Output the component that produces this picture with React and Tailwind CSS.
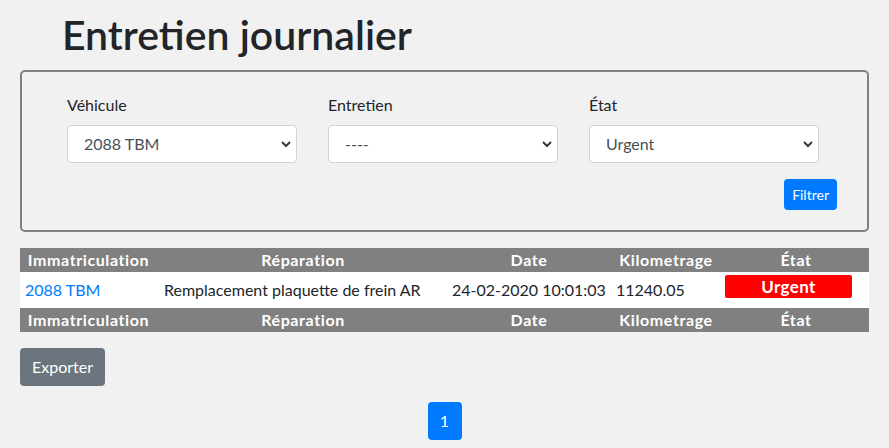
import React from "react";

const FONT = { fontFamily: 'Lato, "Noto Sans", sans-serif' };

function Chevron() {
  return (
    <svg
      className="absolute right-[6px] top-1/2 -translate-y-1/2 pointer-events-none"
      width="10"
      height="7"
      viewBox="0 0 10 7"
    >
      <path d="M1 1.5 L5 5.5 L9 1.5" stroke="#343a40" strokeWidth="2" fill="none" />
    </svg>
  );
}

function SelectBox({ label, value }) {
  return (
    <div className="w-[230px]">
      <label className="block text-[16px] leading-6 text-[#212529] mb-[8px]">{label}</label>
      <div className="relative">
        <div className="h-[38px] bg-white border border-[#ced4da] rounded-[4px] pl-[16px] flex items-center text-[16px] text-[#495057]">
          {value}
        </div>
        <Chevron />
      </div>
    </div>
  );
}

function HeadRow() {
  return (
    <div className="grid grid-cols-[137px_292px_160px_114px_1fr] h-[24px] bg-[#808080] text-white font-bold text-[16px] leading-[24px] text-center tracking-[0.6px]">
      <div>Immatriculation</div>
      <div>Réparation</div>
      <div>Date</div>
      <div>Kilometrage</div>
      <div>État</div>
    </div>
  );
}

export default function App() {
  return (
    <div className="min-h-screen bg-[#f1f1f1] text-[#212529]" style={FONT}>
      <div className="px-[20px] pt-[11px]">
        <h1 className="pl-[42px] text-[41px] font-semibold leading-[48px] text-[#212529]">
          Entretien journalier
        </h1>

        <div className="mt-[11px] border-2 border-[#808080] rounded-[5px] pl-[45px] pr-[30px] pt-[21px] pb-[20px]">
          <div className="flex gap-[31px]">
            <SelectBox label="Véhicule" value="2088 TBM" />
            <SelectBox label="Entretien" value="----" />
            <SelectBox label="État" value="Urgent" />
          </div>
          <div className="flex justify-end mt-[16px]">
            <button className="h-[31px] px-[8px] bg-[#007bff] text-white text-[14px] rounded-[4px]">
              Filtrer
            </button>
          </div>
        </div>

        <div className="mt-[16px]">
          <HeadRow />
          <div className="grid grid-cols-[137px_292px_160px_114px_1fr] h-[36px] bg-white text-[16px] items-center">
            <div className="pl-[5px] text-[#007bff]">2088 TBM</div>
            <div className="pl-[7px]">Remplacement plaquette de frein AR</div>
            <div className="pl-[3px]">24-02-2020 10:01:03</div>
            <div className="pl-[7px]">11240.05</div>
            <div className="pl-[2px] self-start pt-[3px]">
              <div className="w-[127px] h-[23px] bg-[#ff0000] text-white font-bold text-[17px] text-center leading-[23px] rounded-[2px] tracking-[0.4px]">
                Urgent
              </div>
            </div>
          </div>
          <HeadRow />
        </div>

        <button className="mt-[16px] h-[38px] px-[12px] bg-[#6c757d] text-white text-[16px] rounded-[4px]">
          Exporter
        </button>

        <div className="flex justify-center mt-[16px]">
          <button className="w-[34px] h-[38px] bg-[#007bff] text-white text-[16px] rounded-[4px]">
            1
          </button>
        </div>
      </div>
    </div>
  );
}
